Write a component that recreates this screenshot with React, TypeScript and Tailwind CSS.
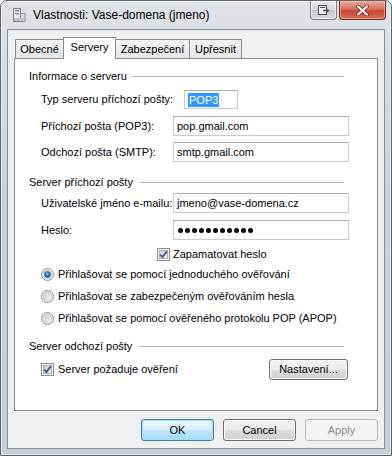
import React from 'react'

function CheckBox({ id }: { id: string }) {
  return (
    <svg width="13" height="13" viewBox="0 0 13 13" className="shrink-0">
      <defs>
        <linearGradient id={`${id}-bg`} x1="0" y1="0" x2="1" y2="1">
          <stop offset="0" stopColor="#cbcfd5" />
          <stop offset="1" stopColor="#f6f6f6" />
        </linearGradient>
      </defs>
      <rect x="0.5" y="0.5" width="12" height="12" fill="#f4f4f4" stroke="#8e8f8f" />
      <rect x="2.5" y="2.5" width="8" height="8" fill={`url(#${id}-bg)`} stroke="#aeb3b9" />
      <path d="M3.2 6.6 L5.4 9.2 L10 3.2" stroke="#4c5c8c" strokeWidth="1.9" fill="none" strokeLinejoin="round" />
    </svg>
  )
}

function Radio({ id, checked }: { id: string; checked?: boolean }) {
  return (
    <svg width="13" height="13" viewBox="0 0 13 13" className="shrink-0">
      <defs>
        <linearGradient id={`${id}-bg`} x1="0" y1="0" x2="1" y2="1">
          <stop offset="0" stopColor="#c5c9cf" />
          <stop offset="1" stopColor="#f7f7f7" />
        </linearGradient>
        <radialGradient id={`${id}-dot`} cx="0.45" cy="0.4" r="0.6">
          <stop offset="0" stopColor="#9fd8f6" />
          <stop offset="0.45" stopColor="#2a7bc4" />
          <stop offset="1" stopColor="#164f8c" />
        </radialGradient>
      </defs>
      <circle cx="6.5" cy="6.5" r="6" fill="#f2f2f2" stroke="#8e8f8f" />
      <circle cx="6.5" cy="6.5" r="4.3" fill={`url(#${id}-bg)`} stroke="#b8bcc1" strokeWidth="0.6" />
      {checked && <circle cx="6.5" cy="6.5" r="3.2" fill={`url(#${id}-dot)`} />}
    </svg>
  )
}

function GroupHeader({ title, lineStart }: { title: string; lineStart: string }) {
  return (
    <div className="flex items-center h-[14px] ml-[14px] mr-[33px]">
      <span className="whitespace-nowrap">{title}</span>
      <div className={`flex-1 h-px bg-[#b5b8bc] ${lineStart}`} />
    </div>
  )
}

function TextBox({ value, className }: { value: React.ReactNode; className: string }) {
  return (
    <div className={`flex items-center pl-[3px] bg-white border border-[#c8ccd2] border-t-[#abadb3] ${className}`}>
      {value}
    </div>
  )
}

function Button({ label, kind }: { label: string; kind?: 'default' | 'disabled' }) {
  if (kind === 'disabled') {
    return (
      <div className="w-[73px] h-[22px] rounded-[3px] border border-[#b5b9bd] bg-[#f4f4f4] flex items-center justify-center text-[#8d8d8d]">
        {label}
      </div>
    )
  }
  if (kind === 'default') {
    return (
      <div className="w-[73px] h-[22px] rounded-[3px] border border-[#3c7fb1] bg-[linear-gradient(#eaf6fd_0%,#d9f0fc_50%,#bee6fd_51%,#a7d9f5_100%)] shadow-[inset_0_0_0_1px_#9fe0fb] flex items-center justify-center">
        {label}
      </div>
    )
  }
  return (
    <div className="w-[73px] h-[22px] rounded-[3px] border border-[#707070] bg-[linear-gradient(#f2f2f2_0%,#ebebeb_50%,#dddddd_51%,#cfcfcf_100%)] shadow-[inset_0_0_0_1px_#fcfcfc] flex items-center justify-center">
      {label}
    </div>
  )
}

export default function App() {
  return (
    <div className="w-[392px] h-[456px] flex flex-col overflow-hidden rounded-t-[7px] border border-[#5f6469] bg-[linear-gradient(#dfe3e8,#ccd2d9_40%,#c8ced5)] font-['Liberation_Sans',Arial,sans-serif] text-[11px] text-black shadow-[inset_0_0_0_1px_rgba(255,255,255,0.55)]">
      {/* Title bar */}
      <div className="h-[28px] flex items-start shrink-0">
        <div className="flex items-center h-[27px] pl-[11px] gap-[7px]">
          <svg width="14" height="16" viewBox="0 0 14 16">
            <rect x="1.5" y="1.5" width="7" height="13" fill="#e9ebee" stroke="#7d8187" />
            <rect x="3" y="3" width="4" height="1.5" fill="#8c9096" />
            <rect x="3" y="6" width="4" height="1.5" fill="#8c9096" />
            <rect x="8.5" y="6.5" width="4.5" height="8" fill="#d7dade" stroke="#8b8f95" />
            <rect x="2" y="11" width="10" height="3" fill="#bfc3c8" />
          </svg>
          <span className="text-[12px] whitespace-nowrap">Vlastnosti: Vase-domena (jmeno)</span>
        </div>
        <div className="flex-1" />
        <div className="flex gap-[2px] mr-[5px]">
          <div className="w-[27px] h-[19px] rounded-b-[4px] border border-t-0 border-[#7c8086] bg-[linear-gradient(#e9ecef,#d2d6db_50%,#c3c8ce_51%,#d5d9de)] shadow-[inset_0_0_0_1px_rgba(255,255,255,0.6)] flex items-center justify-center">
            <svg width="12" height="10" viewBox="0 0 12 10">
              <rect x="0.5" y="0.5" width="8" height="9" fill="#f2f3f5" stroke="#50555c" />
              <rect x="2" y="2" width="5" height="1" fill="#50555c" />
              <path d="M5 5.5 H10 M8 3.5 L10.5 5.5 L8 7.5" stroke="#50555c" strokeWidth="1.3" fill="none" />
            </svg>
          </div>
          <div className="w-[47px] h-[19px] rounded-b-[4px] border border-t-0 border-[#6d2b22] bg-[linear-gradient(#e9a99c,#d8715d_45%,#c74530_55%,#d8735a)] shadow-[inset_0_0_0_1px_rgba(255,200,190,0.5)] flex items-center justify-center">
            <svg width="13" height="11" viewBox="0 0 13 11">
              <path d="M2 1.5 L11 9.5 M11 1.5 L2 9.5" stroke="#5a2018" strokeWidth="3.6" strokeLinecap="round" />
              <path d="M2 1.5 L11 9.5 M11 1.5 L2 9.5" stroke="#ffffff" strokeWidth="2.2" strokeLinecap="round" />
            </svg>
          </div>
        </div>
      </div>

      {/* Client area */}
      <div className="mx-[6px] mb-[6px] flex-1 flex flex-col bg-[#f0f0f0] border border-[#878d95]">
        {/* Tabs */}
        <div className="relative z-10 flex items-end h-[22px] mt-[7px] pl-[7px]">
          <div className="w-[49px] h-[20px] border border-[#898c95] bg-[linear-gradient(#f3f3f3,#e6e6e6)] flex items-center justify-center">Obecné</div>
          <div className="-ml-px w-[53px] h-[22px] border border-b-0 border-[#898c95] bg-white flex items-center justify-center pb-[2px]">Servery</div>
          <div className="-ml-px w-[75px] h-[20px] border border-[#898c95] bg-[linear-gradient(#f3f3f3,#e6e6e6)] flex items-center justify-center">Zabezpečení</div>
          <div className="-ml-px w-[53px] h-[20px] border border-[#898c95] bg-[linear-gradient(#f3f3f3,#e6e6e6)] flex items-center justify-center">Upřesnit</div>
        </div>

        <div className="-mt-px mx-[6px] h-[353px] bg-white border border-[#898c95] flex flex-col">
          <div className="mt-[10px]">
            <GroupHeader title="Informace o serveru" lineStart="ml-[5px]" />
          </div>

          <div className="mt-[7px] ml-[26px] flex items-center h-[19px]">
            <span className="w-[143px]">Typ serveru příchozí pošty:</span>
            <TextBox
              className="w-[54px] h-[19px]"
              value={<span className="bg-[#3399ff] text-white px-px leading-[14px]">POP3</span>}
            />
          </div>

          <div className="mt-[7px] ml-[26px] flex items-center h-[20px]">
            <span className="w-[132px]">Příchozí pošta (POP3):</span>
            <TextBox className="w-[176px] h-[20px]" value="pop.gmail.com" />
          </div>

          <div className="mt-[6px] ml-[26px] flex items-center h-[20px]">
            <span className="w-[132px]">Odchozí pošta (SMTP):</span>
            <TextBox className="w-[176px] h-[20px]" value="smtp.gmail.com" />
          </div>

          <div className="mt-[13px]">
            <GroupHeader title="Server příchozí pošty" lineStart="ml-[7px]" />
          </div>

          <div className="mt-[4px] ml-[26px] flex items-center h-[20px]">
            <span className="w-[132px]">Uživatelské jméno e-mailu:</span>
            <TextBox className="w-[176px] h-[20px]" value="jmeno@vase-domena.cz" />
          </div>

          <div className="mt-[7px] ml-[26px] flex items-center h-[20px]">
            <span className="w-[132px]">Heslo:</span>
            <TextBox
              className="w-[176px] h-[20px]"
              value={
                <div className="flex gap-[2px] pl-px">
                  {Array.from({ length: 11 }).map((_, i) => (
                    <div key={i} className="w-[5px] h-[5px] rounded-full bg-black" />
                  ))}
                </div>
              }
            />
          </div>

          <div className="mt-[6px] ml-[142px] flex items-center gap-[3px] h-[16px]">
            <CheckBox id="cb1" />
            <span>Zapamatovat heslo</span>
          </div>

          <div className="mt-[4px] ml-[26px] flex items-center gap-[4px] h-[16px]">
            <Radio id="r1" checked />
            <span>Přihlašovat se pomocí jednoduchého ověřování</span>
          </div>
          <div className="mt-[6px] ml-[26px] flex items-center gap-[4px] h-[16px]">
            <Radio id="r2" />
            <span>Přihlašovat se zabezpečeným ověřováním hesla</span>
          </div>
          <div className="mt-[6px] ml-[26px] flex items-center gap-[4px] h-[16px]">
            <Radio id="r3" />
            <span>Přihlašovat se pomocí ověřeného protokolu POP (APOP)</span>
          </div>

          <div className="mt-[13px]">
            <GroupHeader title="Server odchozí pošty" lineStart="ml-[7px]" />
          </div>

          <div className="mt-[6px] ml-[26px] mr-[29px] flex items-center h-[21px]">
            <CheckBox id="cb2" />
            <span className="ml-[4px] flex-1">Server požaduje ověření</span>
            <div className="w-[79px] h-[21px] rounded-[3px] border border-[#707070] bg-[linear-gradient(#f2f2f2_0%,#ebebeb_50%,#dddddd_51%,#cfcfcf_100%)] shadow-[inset_0_0_0_1px_#fcfcfc] flex items-center justify-center">
              Nastavení...
            </div>
          </div>
        </div>

        {/* Dialog buttons */}
        <div className="mt-[8px] mr-[6px] flex justify-end gap-[9px]">
          <Button label="OK" kind="default" />
          <Button label="Cancel" />
          <Button label="Apply" kind="disabled" />
        </div>
      </div>
    </div>
  )
}
